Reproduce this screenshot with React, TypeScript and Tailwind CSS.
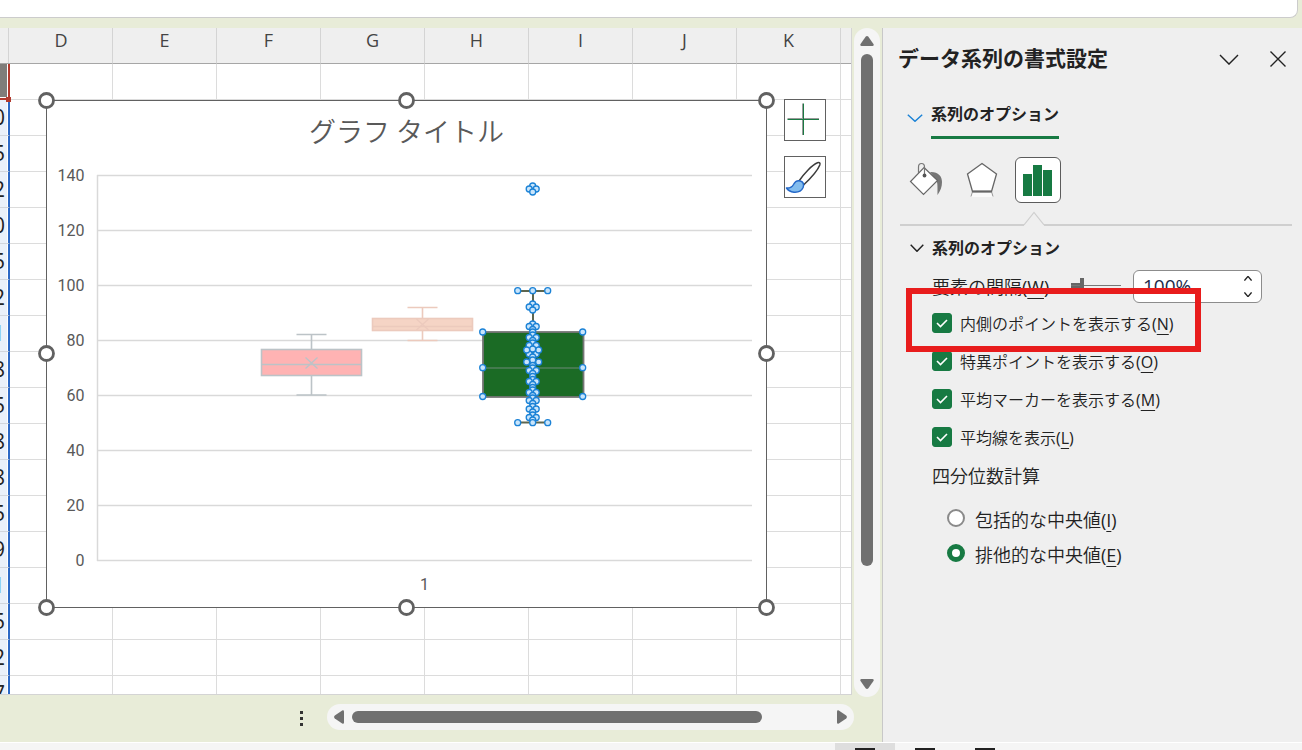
import type { ReactNode } from 'react';

import clsx from 'clsx';

interface BoxSeries {
  x: number;
  left: number;
  right: number;
  top: number;
  q3: number;
  median: number;
  q1: number;
  bottom: number;
  mean: number;
  fill: string;
  stroke: string;
}

interface OptionLabelProps {
  text: string;
  accessKey: string;
}

const COLUMNS = ['D', 'E', 'F', 'G', 'H', 'I', 'J', 'K'];

const CELL_VALUES = [0, 5, 2, 0, 5, 2, 1, 8, 5, 8, 8, 5, 9, 1, 5, 2, 7];

const AXIS_TICKS = [0, 20, 40, 60, 80, 100, 120, 140];

const FADED_SERIES: BoxSeries[] = [
  {
    x: 311.5,
    left: 261.5,
    right: 361.5,
    top: 334.5,
    q3: 349.5,
    median: 364.5,
    q1: 375.5,
    bottom: 395,
    mean: 363,
    fill: '#ffb3b3',
    stroke: '#bcc3c7',
  },
  {
    x: 422.5,
    left: 372.5,
    right: 472.5,
    top: 307.5,
    q3: 318.5,
    median: 326.5,
    q1: 330.5,
    bottom: 340.5,
    mean: 324.5,
    fill: '#f5d4c5',
    stroke: '#eccabd',
  },
];

// [y, horizontal spread] of the inner points of the selected series
const POINTS: [number, number][] = [
  [186, 0],
  [189, 3.5],
  [192, 0],
  [304, 0],
  [307, 3.5],
  [310, 0],
  [324, 0],
  [326.5, 3.5],
  [329.5, 0],
  [332, 0],
  [335, 0],
  [337.5, 3.5],
  [340.5, 0],
  [343, 0],
  [345.5, 3.5],
  [354, 3.5],
  [350, 6],
  [349, 0],
  [357, 0],
  [360, 0],
  [362, 6],
  [365.5, 0],
  [368, 0],
  [370.5, 3.5],
  [373.5, 0],
  [376.5, 0],
  [379.5, 0],
  [381.5, 3.5],
  [384.5, 0],
  [387.5, 0],
  [390, 0],
  [392.5, 3.5],
  [395.5, 0],
  [398, 0],
  [400.5, 3.5],
  [403.5, 0],
  [406.5, 0],
  [409, 3.5],
  [412, 0],
  [415, 0],
  [417.5, 3.5],
  [420, 0],
];

const CHECKBOXES: OptionLabelProps[] = [
  { text: '内側のポイントを表示する', accessKey: 'N' },
  { text: '特異ポイントを表示する', accessKey: 'O' },
  { text: '平均マーカーを表示する', accessKey: 'M' },
  { text: '平均線を表示', accessKey: 'L' },
];

const RADIOS: OptionLabelProps[] = [
  { text: '包括的な中央値', accessKey: 'I' },
  { text: '排他的な中央値', accessKey: 'E' },
];

function OptionLabel({ text, accessKey }: OptionLabelProps) {
  return (
    <>
      {text}
      <span className="font-normal">
        (<span className="underline underline-offset-4">{accessKey}</span>)
      </span>
    </>
  );
}

function Marker({ x, y }: { x: number; y: number }) {
  return <circle cx={x} cy={y} r="3" fill="#c9e5fb" stroke="#1b82d6" strokeWidth="1.3" />;
}

function FadedBox({ series: s }: { series: BoxSeries }) {
  return (
    <g stroke={s.stroke} strokeWidth="1.6" fill="none">
      <path d={`M${s.x} ${s.top}V${s.bottom}M${s.x - 15} ${s.top}h30M${s.x - 15} ${s.bottom}h30`} />
      <rect x={s.left} y={s.q3} width={s.right - s.left} height={s.q1 - s.q3} fill={s.fill} />
      <path d={`M${s.left} ${s.median}H${s.right}`} />
      <path
        d={`M${s.x - 6} ${s.mean - 5.5}l12 11M${s.x + 6} ${s.mean - 5.5}l-12 11`}
        strokeWidth="1.4"
      />
    </g>
  );
}

function Chart() {
  return (
    <svg
      className="absolute left-9 top-[62px]"
      width="741"
      height="528"
      viewBox="36 90 741 528"
      role="img"
      aria-label="グラフ タイトル"
    >
      <rect x="46.5" y="100.5" width="720" height="507" fill="#fff" stroke="#616161" />
      <text
        x="406.5"
        y="142"
        textAnchor="middle"
        className="fill-[#595959] font-['Noto_Sans_CJK_JP',sans-serif] text-[27px] font-[350]"
      >
        グラフ タイトル
      </text>

      <g className="fill-[#595959] font-['Roboto',sans-serif] text-[16px]">
        {AXIS_TICKS.map((tick) => (
          <g key={tick}>
            <path
              d={`M97 ${560.5 - tick * 2.75}H752`}
              stroke="#d9d9d9"
              strokeWidth="1.5"
            />
            <text x="84.5" y={566 - tick * 2.75} textAnchor="end">
              {tick}
            </text>
          </g>
        ))}
        <text x="424.5" y="590" textAnchor="middle">
          1
        </text>
      </g>
      <path d="M97.5 175V561" stroke="#d9d9d9" strokeWidth="1.5" />

      {FADED_SERIES.map((series) => (
        <FadedBox key={series.x} series={series} />
      ))}

      <path
        d="M533 291V422M518 291h30M518 422.5h30"
        stroke="#5c6650"
        strokeWidth="2"
        fill="none"
      />
      <rect
        x="483"
        y="332"
        width="100.5"
        height="65"
        fill="#1b6b25"
        stroke="#767676"
        strokeWidth="1.8"
      />
      <path d="M483 368H583" stroke="#6f8a78" />
      {POINTS.map(([y, spread]) =>
        spread === 0 ? (
          <Marker key={`${y}-0`} x={532.7} y={y} />
        ) : (
          <g key={`${y}-${spread}`}>
            <Marker x={532.7 - spread} y={y} />
            <Marker x={532.7 + spread} y={y} />
          </g>
        ),
      )}
      {[290.7, 422.7].map((y) =>
        [517.7, 532.7, 547.7].map((x) => <Marker key={`${x}-${y}`} x={x} y={y} />),
      )}
      {[332, 367.7, 396.5].map((y) =>
        [482.7, 582.7].map((x) => <Marker key={`${x}-${y}`} x={x} y={y} />),
      )}

      {[100.5, 353.5, 607.5].map((y) =>
        [46.5, 406.5, 766.5]
          .filter((x) => x !== 406.5 || y !== 353.5)
          .map((x) => (
            <circle
              key={`${x}-${y}`}
              cx={x}
              cy={y}
              r="7"
              fill="#fff"
              stroke="#616161"
              strokeWidth="2.8"
            />
          )),
      )}
    </svg>
  );
}

function ChartButtons() {
  return (
    <div className="absolute left-[784px] top-[71px] flex flex-col gap-[15px]">
      <button
        type="button"
        aria-label="グラフ要素"
        className="size-[42px] border border-[#616161] bg-white"
      >
        <svg width="40" height="40" viewBox="0 0 40 40" fill="none">
          <path d="M2.500 18.500H34M17.500 3.500V35" stroke="#9a9a9a" />
          <path d="M2.500 19.500H34M18.500 3.500V35" stroke="#1a7a43" />
        </svg>
      </button>
      <button
        type="button"
        aria-label="グラフ スタイル"
        className="size-[42px] border border-[#616161] bg-white"
      >
        <svg width="40" height="40" viewBox="0 0 40 40" fill="none" strokeLinejoin="round">
          <path
            d="M14 24C19 16.500 27 8 32.500 5.800c2-.8 3 .2 2.300 2.200C32.500 14 26 21 18.500 28z"
            fill="#fff"
            stroke="#3c3c3c"
            strokeWidth="1.5"
          />
          <path
            d="M1.500 31c3 .3 5.500-.7 7-3.500 1.500-3 4-4.300 6.800-3.600 3 .8 4 3.600 2.800 6.600C16.500 34 13 35.500 9 35.200 5.500 34.800 3 33.500 1.500 31z"
            fill="#83bdee"
            stroke="#2468c8"
            strokeWidth="1.5"
          />
        </svg>
      </button>
    </div>
  );
}

function SheetGrid() {
  return (
    <table className="w-full table-fixed border-separate border-spacing-0 font-['Open_Sans',sans-serif]">
      <colgroup>
        <col className="w-2.5" />
        <col className="w-[103px]" />
        {COLUMNS.slice(1).map((column) => (
          <col key={column} className="w-[104px]" />
        ))}
        <col />
      </colgroup>
      <thead>
        <tr className="h-9 bg-[#efefef] text-[18px] text-[#444]">
          <th className="border-b border-[#a6a6a6] p-0">
            <div className="mr-px h-[35px] border-r border-[#d4d4d4]" />
          </th>
          {COLUMNS.map((column) => (
            <th
              key={column}
              className="border-b border-r border-b-[#a6a6a6] border-r-[#d4d4d4] p-0 align-top font-normal leading-6"
            >
              {column}
            </th>
          ))}
          <th className="border-b border-[#a6a6a6] p-0" />
        </tr>
      </thead>
      <tbody>
        <tr className="h-9">
          <td className="border-b-2 border-r-2 border-[#b23a2e] p-0">
            <div className="h-[34px] border-b border-r border-white bg-[#7f7d7a]" />
          </td>
          {COLUMNS.map((column) => (
            <td key={column} className="border-b border-r border-[#dcdcdc] p-0" />
          ))}
          <td className="border-b border-[#dcdcdc] p-0" />
        </tr>
        {CELL_VALUES.map((value, row) => (
          <tr key={row} className="h-9">
            <td className="border-b border-r-2 border-b-[#d0d5dd] border-r-[#2b68c5] p-0">
              <div
                className={clsx(
                  'flex h-[35px] items-center justify-end overflow-hidden border-r border-white bg-[#e9f0fa] pr-[2px] text-[21px] leading-none',
                  value === 1 ? 'text-[#6fb1ea]' : 'text-[#222]',
                )}
              >
                {value}
              </div>
            </td>
            {COLUMNS.map((column) => (
              <td key={column} className="border-b border-r border-[#dcdcdc] p-0" />
            ))}
            <td className="border-b border-[#dcdcdc] p-0" />
          </tr>
        ))}
      </tbody>
    </table>
  );
}

function VerticalScrollbar() {
  return (
    <div className="mx-0.5 -mb-0.5 flex w-[26px] flex-col items-center rounded-full bg-[#f5f5f5] py-2">
      <button type="button" aria-label="上へスクロール">
        <svg className="block" width="14" height="10" viewBox="0 0 14 10" fill="#707070">
          <path d="M5.600.8Q7-.6 8.400.8L13.600 8.200Q14 10 12.500 10H1.500Q0 10 .4 8.200z" />
        </svg>
      </button>
      <div className="my-2 w-3 flex-1">
        <div className="h-[83%] rounded-full bg-[#707070]" />
      </div>
      <button type="button" aria-label="下へスクロール">
        <svg className="block" width="14" height="10" viewBox="0 0 14 10" fill="#707070">
          <path d="M5.600 9.200Q7 10.600 8.400 9.200L13.600 1.800Q14 0 12.500 0H1.500Q0 0 .4 1.800z" />
        </svg>
      </button>
    </div>
  );
}

function HorizontalScrollbar() {
  return (
    <div className="flex h-[47px] items-start pr-7 pt-[9px]">
      <div className="flex h-[26px] w-[327px] flex-col items-end justify-center gap-[3px] pr-6 pt-0.5">
        <span className="size-[3px] bg-[#333]" />
        <span className="size-[3px] bg-[#333]" />
        <span className="size-[3px] bg-[#333]" />
      </div>
      <div className="flex h-[26px] flex-1 items-center gap-2 rounded-full bg-[#f5f5f5] px-[7px]">
        <button type="button" aria-label="左へスクロール">
          <svg className="block" width="10" height="14" viewBox="0 0 10 14" fill="#707070">
            <path d="M.8 5.600Q-.6 7 .8 8.400L8.200 13.600Q10 14 10 12.500V1.500Q10 0 8.200.4z" />
          </svg>
        </button>
        <div className="flex-1">
          <div className="h-3 w-[86%] rounded-full bg-[#707070]" />
        </div>
        <button type="button" aria-label="右へスクロール">
          <svg className="block" width="10" height="14" viewBox="0 0 10 14" fill="#707070">
            <path d="M9.200 5.600Q10.600 7 9.200 8.400L1.800 13.600Q0 14 0 12.500V1.500Q0 0 1.800.4z" />
          </svg>
        </button>
      </div>
    </div>
  );
}

function FillIcon() {
  return (
    <svg width="34" height="36" viewBox="0 0 34 36" fill="none">
      <path d="M21 10c8-.5 12 4 12 10 0 5-1.500 8.500-4.500 13 0-7 .3-11-1-15z" fill="#767676" />
      <path d="M15 5.500L28.500 18.500 14.500 32.500 1.500 19.500z" fill="#fff" stroke="#666" strokeWidth="1.2" />
      <path d="M9.500 11V5q0-3.500 3-3.500T15.500 5v8" stroke="#777" strokeWidth="1.2" />
      <circle cx="15.500" cy="13.500" r="1.900" fill="#555" />
    </svg>
  );
}

function EffectsIcon() {
  return (
    <svg width="32" height="36" viewBox="0 0 32 36" fill="none">
      <path d="M6 29h20l1 6H5z" fill="#fafafa" />
      <path d="M6.500 29.500L5 34.500M25.500 29.500L27 34.500" stroke="#999" />
      <path
        d="M16 1.500L30.500 12 25.500 29.500H6.500L1.500 12z"
        fill="#fff"
        stroke="#666"
        strokeWidth="1.3"
      />
      <path d="M6.500 29.500h19" stroke="#666" strokeWidth="2" />
    </svg>
  );
}

function Chevron({ className }: { className: string }) {
  return (
    <svg
      className={className}
      viewBox="0 0 20 12"
      fill="none"
      stroke="currentColor"
      strokeWidth="1.4"
      preserveAspectRatio="none"
    >
      <path d="M1 1L10 11L19 1" vectorEffect="non-scaling-stroke" />
    </svg>
  );
}

function IconTab({ label, selected, children }: { label: string; selected?: boolean; children: ReactNode }) {
  return (
    <button
      type="button"
      aria-label={label}
      aria-pressed={selected}
      className={clsx(
        'flex size-[46px] items-center justify-center rounded-md',
        selected && 'border border-[#5c5c5c] bg-white',
      )}
    >
      {children}
    </button>
  );
}

function FormatPanel() {
  return (
    <aside className="w-[420px] border-l border-[#c8c8c8] bg-[#efefef] font-['Open_Sans','Noto_Sans_CJK_JP',sans-serif] font-[350] text-[#222]">
      <header className="flex h-[62px] items-center pl-[15px] pr-4">
        <h1 className="flex-1 pb-0.5 text-[21px] font-bold leading-8">データ系列の書式設定</h1>
        <button type="button" aria-label="作業ウィンドウのオプション" className="mr-[31px]">
          <Chevron className="block h-[11px] w-5" />
        </button>
        <button type="button" aria-label="閉じる">
          <svg className="block size-4" viewBox="0 0 16 16" stroke="currentColor" strokeWidth="1.4">
            <path d="M.5.5L15.500 15.500M15.500.5L.5 15.500" />
          </svg>
        </button>
      </header>

      <div className="mt-3 flex items-start pl-6">
        <Chevron className="mt-3 h-2 w-4 text-[#1b82d6]" />
        <button
          type="button"
          className="ml-2 border-b-[3px] border-[#177a43] pb-2.5 text-[16px] font-bold leading-6"
        >
          系列のオプション
        </button>
      </div>

      <div className="mt-[18px] flex gap-2.5 pl-5">
        <IconTab label="塗りつぶしと線">
          <FillIcon />
        </IconTab>
        <IconTab label="効果">
          <EffectsIcon />
        </IconTab>
        <IconTab label="系列のオプション" selected>
          <svg width="30" height="32" viewBox="0 0 30 32" fill="#177a43">
            <path d="M0 10h9v22H0zM10 1h9v31h-9zM20 6h9v26h-9z" />
          </svg>
        </IconTab>
      </div>

      <div className="mt-2 flex items-end pl-[17px] pr-2.5">
        <span className="h-0.5 w-[124px] bg-[#cfcfcf]" />
        <svg className="block" width="20" height="15" viewBox="0 0 20 15" fill="none">
          <path d="M0 14L10 1.500L20 14" stroke="#cfcfcf" strokeWidth="1.200" />
        </svg>
        <span className="h-0.5 flex-1 bg-[#cfcfcf]" />
      </div>

      <section className="pl-[49px] pr-10 pt-[10px]">
        <h2 className="-ml-[22px] flex items-center gap-2 text-[16px] font-bold leading-6">
          <Chevron className="h-2 w-3.5" />
          系列のオプション
        </h2>

        <div className="mt-2.5 flex h-[34px] items-start">
          <label htmlFor="gap-width" className="w-[139px] text-[18px] leading-[34px]">
            <OptionLabel text="要素の間隔" accessKey="W" />
          </label>
          <input
            type="range"
            aria-label="要素の間隔"
            min="0"
            max="500"
            defaultValue="100"
            className="mt-[7px] h-4 w-[50px] appearance-none bg-[linear-gradient(#666,#666)] bg-[length:10px_5px] bg-left bg-no-repeat [&::-webkit-slider-runnable-track]:h-px [&::-webkit-slider-runnable-track]:bg-[#777] [&::-webkit-slider-thumb]:-mt-[7px] [&::-webkit-slider-thumb]:h-4 [&::-webkit-slider-thumb]:w-1 [&::-webkit-slider-thumb]:appearance-none [&::-webkit-slider-thumb]:bg-[#666]"
          />
          <div className="ml-3 flex h-[33px] w-[129px] rounded-md border border-[#8c8c8c] bg-white">
            <input
              id="gap-width"
              type="text"
              defaultValue="100%"
              className="min-w-0 flex-1 rounded-md pl-[9px] text-[19px] font-normal text-[#1d2b4a] outline-none"
            />
            <div className="flex w-[26px] flex-col items-center justify-between py-1">
              <button type="button" aria-label="増やす" className="py-px">
                <Chevron className="block h-[5px] w-2 rotate-180" />
              </button>
              <button type="button" aria-label="減らす" className="py-px">
                <Chevron className="block h-[5px] w-2" />
              </button>
            </div>
          </div>
        </div>

        <div className="relative">
          {CHECKBOXES.map(({ text, accessKey }) => (
            <label key={accessKey} className="flex h-[38px] items-center gap-2 text-[16px]">
              <span className="grid size-5">
                <input
                  type="checkbox"
                  defaultChecked
                  className="peer col-start-1 row-start-1 size-5 appearance-none rounded-[3px] border border-[#767676] bg-white checked:border-[#177a43] checked:bg-[#177a43]"
                />
                <svg
                  className="pointer-events-none invisible col-start-1 row-start-1 size-5 peer-checked:visible"
                  viewBox="0 0 20 20"
                  fill="none"
                  stroke="#fff"
                  strokeWidth="1.600"
                >
                  <path d="M5 10L8.500 13.500L15 7" />
                </svg>
              </span>
              <span className="pt-0.5">
                <OptionLabel text={text} accessKey={accessKey} />
              </span>
            </label>
          ))}
          <div className="pointer-events-none absolute -left-[26px] -top-4 h-16 w-[295px] border-[6px] border-[#e81c1c]" />
        </div>

        <fieldset>
          <legend className="text-[18px] leading-[40px]">四分位数計算</legend>
          <div className="mt-1 pl-[15px]">
            {RADIOS.map(({ text, accessKey }) => (
              <label key={accessKey} className="flex h-[35px] items-center gap-2.5 text-[18px]">
                <input
                  type="radio"
                  name="quartile"
                  defaultChecked={accessKey === 'E'}
                  className="size-[18px] appearance-none rounded-full border-2 border-[#8a8a8a] bg-white checked:border-[5px] checked:border-[#177a43]"
                />
                <span className="pt-1.5">
                  <OptionLabel text={text} accessKey={accessKey} />
                </span>
              </label>
            ))}
          </div>
        </fieldset>
      </section>
    </aside>
  );
}

function StatusBar() {
  return (
    <footer className="flex h-2 justify-end border-t border-white bg-[#f5f5f5] pr-[287px]">
      {['標準', 'ページ レイアウト', '改ページ プレビュー'].map((view, index) => (
        <button
          key={view}
          type="button"
          aria-label={view}
          className={clsx('flex w-[60px] items-end justify-center', index === 0 && 'bg-[#dedede]')}
        >
          <span className="h-0.5 w-5 bg-[#222]" />
        </button>
      ))}
    </footer>
  );
}

export default function App() {
  return (
    <div className="flex h-screen flex-col overflow-hidden bg-[#e8ecd8]">
      <div className="mb-2.5 mr-1 h-[18px] rounded-br-lg border-b border-r border-[#cccccc] bg-white" />
      <div className="flex min-h-0 flex-1">
        <main className="flex min-w-0 flex-1 flex-col">
          <div className="flex min-h-0 flex-1">
            <div className="relative min-w-0 flex-1 overflow-hidden border-b border-r border-[#d4d4d4] bg-white">
              <SheetGrid />
              <span className="absolute left-1.5 top-[69px] size-[5px] bg-[#b23a2e]" />
              <Chart />
              <ChartButtons />
            </div>
            <VerticalScrollbar />
          </div>
          <HorizontalScrollbar />
        </main>
        <FormatPanel />
      </div>
      <StatusBar />
    </div>
  );
}
